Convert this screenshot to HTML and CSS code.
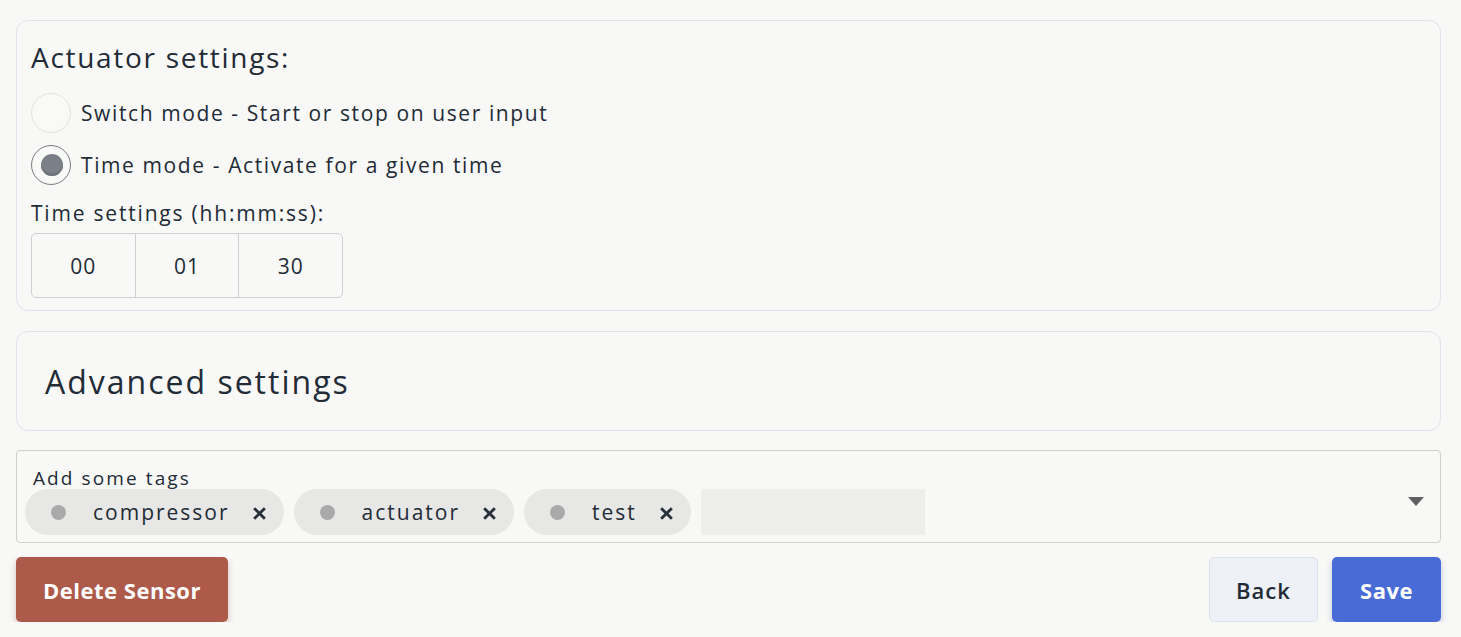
FILE: index.html
```html
<!DOCTYPE html>
<html lang="en">
<head>
  <meta charset="UTF-8">
  <title>Sensor settings</title>
  <link rel="stylesheet" href="styles.css">
</head>
<body>
  <div class="page">
    <section class="card actuator">
      <h2 class="card-title">Actuator settings:</h2>
      <label class="radio-row">
        <span class="radio"></span>
        <span>Switch mode - Start or stop on user input</span>
      </label>
      <label class="radio-row">
        <span class="radio checked"></span>
        <span>Time mode - Activate for a given time</span>
      </label>
      <div class="time-label">Time settings (hh:mm:ss):</div>
      <div class="time-box">
        <div class="time-cell">00</div>
        <div class="time-cell">01</div>
        <div class="time-cell">30</div>
      </div>
    </section>

    <section class="card advanced">
      <h2 class="advanced-title">Advanced settings</h2>
    </section>

    <div class="tags">
      <div class="tags-label">Add some tags</div>
      <div class="tags-row">
        <span class="chip"><span class="dot"></span><span class="chip-text">compressor</span><svg class="chip-x" viewBox="0 0 14 14"><path d="M2 2 L12 12 M12 2 L2 12"/></svg></span>
        <span class="chip"><span class="dot"></span><span class="chip-text">actuator</span><svg class="chip-x" viewBox="0 0 14 14"><path d="M2 2 L12 12 M12 2 L2 12"/></svg></span>
        <span class="chip"><span class="dot"></span><span class="chip-text">test</span><svg class="chip-x" viewBox="0 0 14 14"><path d="M2 2 L12 12 M12 2 L2 12"/></svg></span>
        <span class="tag-input"></span>
      </div>
      <span class="caret"></span>
    </div>

    <div class="actions">
      <button class="btn btn-delete">Delete Sensor</button>
      <div class="actions-right">
        <button class="btn btn-back">Back</button>
        <button class="btn btn-save">Save</button>
      </div>
    </div>
  </div>
</body>
</html>
```

FILE: styles.css
```css
body {
    margin: 0;
    background: #f8f8f6;
    color: #222b36;
    font-family: "Open Sans", "Liberation Sans", sans-serif;
}

.page {
    padding: 20px 20px 0 16px;
    display: flex;
    flex-direction: column;
}

/******************* cards *******************/

.card {
    border: 1px solid #dfe5ec;
    border-radius: 12px;
}

.actuator {
    height: 289px;
    padding: 0 14px;
    margin-bottom: 20px;
}

.card-title {
    margin: 0;
    height: 72px;
    line-height: 72px;
    font-size: 28px;
    font-weight: 400;
    letter-spacing: 1.7px;
}

.radio-row {
    display: flex;
    align-items: center;
    gap: 10px;
    height: 40px;
    margin-bottom: 12px;
    font-size: 21px;
    letter-spacing: 1.6px;
}

.radio {
    width: 38px;
    height: 38px;
    border: 1px solid #e2e2e0;
    border-radius: 50%;
    background: #f9f9f7;
    position: relative;
}

.radio.checked {
    border: 1px solid #7a7f86;
    box-shadow: inset 0 0 0 1px #f1f1ef;
}

.radio.checked::after {
    content: "";
    position: absolute;
    left: 9px;
    top: 8px;
    width: 22px;
    height: 22px;
    border-radius: 50%;
    background: #7b8088;
    box-shadow: inset 0 -3px 0 #70757c;
}

.time-label {
    font-size: 21px;
    letter-spacing: 1.8px;
    height: 36px;
    line-height: 32px;
    margin-top: 6px;
}

.time-box {
    display: flex;
    width: 310px;
    height: 63px;
    border: 1px solid #ccd0d4;
    border-radius: 5px;
}

.time-cell {
    flex: 1;
    display: flex;
    align-items: center;
    justify-content: center;
    font-size: 21px;
    letter-spacing: 1px;
}

.time-cell + .time-cell {
    border-left: 1px solid #ccd0d4;
}

.advanced {
    height: 98px;
    padding: 0 28px;
    display: flex;
    align-items: center;
    margin-bottom: 19px;
}

.advanced-title {
    margin: 0;
    font-size: 32px;
    font-weight: 400;
    letter-spacing: 2px;
}

/******************* tags *******************/

.tags {
    position: relative;
    height: 91px;
    border: 1px solid #cfcfcd;
    border-radius: 4px;
    padding: 0 8px;
    margin-bottom: 14px;
}

.tags-label {
    font-size: 19px;
    letter-spacing: 2.1px;
    padding-left: 8px;
    height: 38px;
    line-height: 54px;
}

.tags-row {
    display: flex;
    gap: 10px;
    align-items: center;
}

.chip {
    display: inline-flex;
    align-items: center;
    height: 46px;
    border-radius: 23px;
    background: #e7e7e5;
    padding: 0 17px 0 26px;
    font-size: 21px;
    letter-spacing: 2px;
}

.dot {
    width: 15px;
    height: 15px;
    border-radius: 50%;
    background: #a9a9a9;
    margin-right: 27px;
}

.chip-text {
    margin-right: 22px;
}

.chip-x {
    width: 15px;
    height: 15px;
    margin-top: 3px;
    stroke: #27303a;
    stroke-width: 2.6;
    fill: none;
}

.tag-input {
    width: 224px;
    height: 46px;
    background: #eeeeec;
}

.caret {
    position: absolute;
    right: 16px;
    top: 46px;
    border-left: 8px solid transparent;
    border-right: 8px solid transparent;
    border-top: 9px solid #616161;
}

/******************* buttons *******************/

.actions {
    display: flex;
    justify-content: space-between;
}

.actions-right {
    display: flex;
    gap: 14px;
}

.btn {
    height: 65px;
    border-radius: 5px;
    font-family: inherit;
    font-size: 22px;
    font-weight: 700;
    letter-spacing: 0.5px;
    cursor: pointer;
}

.btn-delete {
    width: 212px;
    border: none;
    background: #ae5a4a;
    color: #fff;
    box-shadow: 0 4px 6px rgba(140, 60, 50, 0.3);
}

.btn-back {
    width: 109px;
    border: 1px solid #dde3ea;
    background: #edf1f7;
    color: #222b36;
    font-weight: 600;
    letter-spacing: 1px;
}

.btn-save {
    width: 109px;
    border: none;
    background: #486bd6;
    color: #fff;
    box-shadow: 0 4px 6px rgba(60, 90, 200, 0.3);
}
```
